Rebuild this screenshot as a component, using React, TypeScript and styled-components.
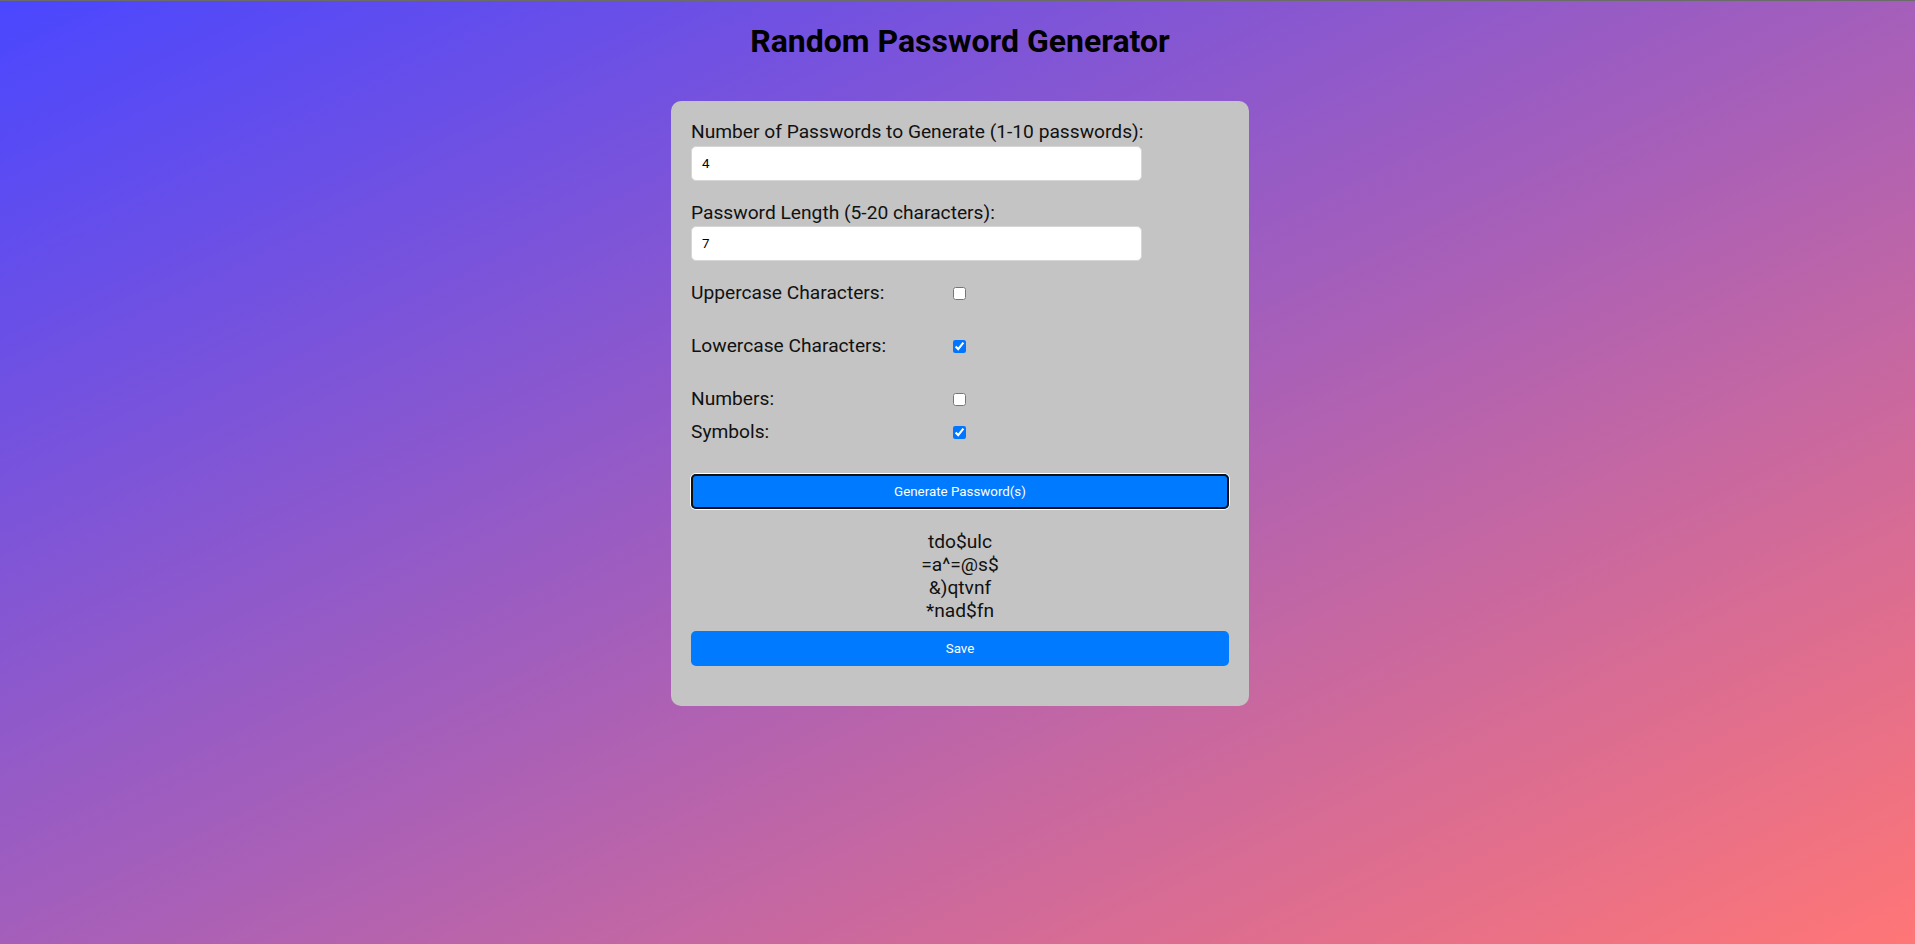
import React, { useState } from "react";
import styled, { createGlobalStyle } from "styled-components";

const GlobalStyle = createGlobalStyle`
  html, body {
    margin: 0;
    padding: 0;
  }
  body {
    min-height: 100vh;
    box-sizing: border-box;
    border-top: 1px solid #6b6b6b;
    background: linear-gradient(to bottom right, #4a47ff, #ff7676);
    font-family: Roboto, "Liberation Sans", Arial, sans-serif;
    color: #111;
  }
`;

const Page = styled.div`
  display: flex;
  flex-direction: column;
  align-items: center;
  padding-left: 5px;
`;

const Title = styled.h1`
  margin: 21px 0;
  font-size: 32px;
  font-weight: 700;
  color: #000;
  line-height: normal;
`;

const Card = styled.div`
  width: 578px;
  box-sizing: border-box;
  margin-top: 20px;
  padding: 20px 20px 40px;
  background: #c4c4c4;
  border-radius: 10px;
  display: flex;
  flex-direction: column;
`;

const Field = styled.div`
  display: flex;
  flex-direction: column;
  margin-bottom: 21px;
`;

const Label = styled.label`
  font-size: 19.2px;
  line-height: 22.5px;
  color: #111;
  margin-bottom: 2px;
`;

const TextInput = styled.input`
  width: 451px;
  height: 35px;
  box-sizing: border-box;
  padding: 0 10px;
  border: 1px solid #d6d6d6;
  border-radius: 5px;
  background: #fff;
  font-family: Roboto, "Liberation Sans", Arial, sans-serif;
  font-size: 13.33px;
  color: #000;
  outline: none;
`;

const CheckRow = styled.div<{ $after: number }>`
  display: flex;
  align-items: center;
  height: 22.5px;
  margin-bottom: ${(p) => p.$after}px;
`;

const CheckLabel = styled.label`
  width: 262px;
  font-size: 19.2px;
  line-height: 22.5px;
  color: #111;
`;

const Box = styled.input`
  width: 13px;
  height: 13px;
  margin: 0;
  accent-color: #0075ff;
`;

const Button = styled.button<{ $focused?: boolean }>`
  width: 100%;
  height: 35px;
  border: none;
  border-radius: 5px;
  background: #007bff;
  color: #fff;
  font-family: Roboto, "Liberation Sans", Arial, sans-serif;
  font-size: 13.33px;
  cursor: pointer;
  box-shadow: ${(p) =>
    p.$focused ? "inset 0 0 0 2px #101010, 0 0 0 1px #fff" : "none"};
  outline: none;
`;

const Output = styled.div`
  margin: 21px 0 9.5px;
  text-align: center;
  font-size: 19.2px;
  line-height: 23px;
  color: #111;
`;

const Line = styled.div``;

export default function App() {
  const [count, setCount] = useState("4");
  const [length, setLength] = useState("7");
  const [upper, setUpper] = useState(false);
  const [lower, setLower] = useState(true);
  const [nums, setNums] = useState(false);
  const [syms, setSyms] = useState(true);
  const passwords = ["tdo$ulc", "=a^=@s$", "&)qtvnf", "*nad$fn"];

  return (
    <>
      <GlobalStyle />
      <Page>
        <Title>Random Password Generator</Title>
        <Card>
          <Field>
            <Label htmlFor="count">Number of Passwords to Generate (1-10 passwords):</Label>
            <TextInput id="count" type="text" value={count} onChange={(e) => setCount(e.target.value)} />
          </Field>
          <Field>
            <Label htmlFor="len">Password Length (5-20 characters):</Label>
            <TextInput id="len" type="text" value={length} onChange={(e) => setLength(e.target.value)} />
          </Field>
          <CheckRow $after={30.5}>
            <CheckLabel htmlFor="up">Uppercase Characters:</CheckLabel>
            <Box id="up" type="checkbox" checked={upper} onChange={() => setUpper(!upper)} />
          </CheckRow>
          <CheckRow $after={30.5}>
            <CheckLabel htmlFor="low">Lowercase Characters:</CheckLabel>
            <Box id="low" type="checkbox" checked={lower} onChange={() => setLower(!lower)} />
          </CheckRow>
          <CheckRow $after={10.5}>
            <CheckLabel htmlFor="num">Numbers:</CheckLabel>
            <Box id="num" type="checkbox" checked={nums} onChange={() => setNums(!nums)} />
          </CheckRow>
          <CheckRow $after={30}>
            <CheckLabel htmlFor="sym">Symbols:</CheckLabel>
            <Box id="sym" type="checkbox" checked={syms} onChange={() => setSyms(!syms)} />
          </CheckRow>
          <Button $focused>Generate Password(s)</Button>
          <Output>
            {passwords.map((p) => (
              <Line key={p}>{p}</Line>
            ))}
          </Output>
          <Button>Save</Button>
        </Card>
      </Page>
    </>
  );
}
